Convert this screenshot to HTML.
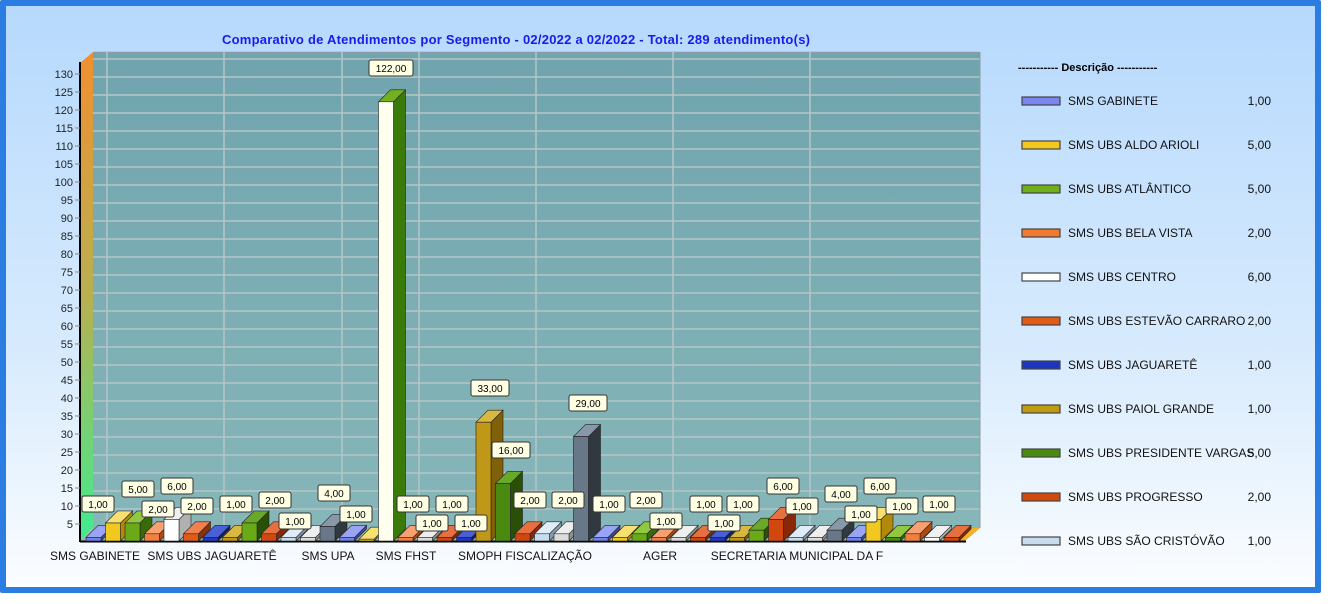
<!DOCTYPE html>
<html><head><meta charset="utf-8"><style>
html,body{margin:0;padding:0;background:#fff;}
#w{position:absolute;left:0;top:0;width:1309px;height:581px;border:6px solid #2b7de1;border-radius:2px;background:linear-gradient(#b6d9fd,#d8ebfd 60%,#fbfdff);}
svg{position:absolute;left:0;top:0;}
text{font-family:"Liberation Sans",sans-serif;}
</style></head><body>
<div id="w"></div>
<svg width="1332" height="604" viewBox="0 0 1332 604">
<defs>
<linearGradient id="lw" x1="0" y1="0" x2="0" y2="1"><stop offset="0" stop-color="#f09030"/><stop offset="0.5" stop-color="#b8b050"/><stop offset="1" stop-color="#40ec90"/></linearGradient>
<linearGradient id="bw" x1="0" y1="0" x2="0" y2="1"><stop offset="0" stop-color="#70a4ae"/><stop offset="1" stop-color="#86b6b8"/></linearGradient>
</defs>
<text x="516" y="44" text-anchor="middle" font-size="13" font-weight="bold" fill="#1a1aee" textLength="588" lengthAdjust="spacing">Comparativo de Atendimentos por Segmento - 02/2022 a 02/2022 - Total: 289 atendimento(s)</text>
<!-- back wall -->
<rect x="93" y="52" width="887" height="476" fill="url(#bw)"/>
<g stroke="#b4c6c8" stroke-width="1.5">
<line x1="93" y1="52.5" x2="980" y2="52.5" stroke="#8a9ea4"/>
<line x1="93" y1="59" x2="980" y2="59"/><line x1="93" y1="77" x2="980" y2="77"/><line x1="93" y1="95" x2="980" y2="95"/><line x1="93" y1="113" x2="980" y2="113"/><line x1="93" y1="131" x2="980" y2="131"/><line x1="93" y1="149" x2="980" y2="149"/><line x1="93" y1="167" x2="980" y2="167"/><line x1="93" y1="185" x2="980" y2="185"/><line x1="93" y1="203" x2="980" y2="203"/><line x1="93" y1="221" x2="980" y2="221"/><line x1="93" y1="239" x2="980" y2="239"/><line x1="93" y1="257" x2="980" y2="257"/><line x1="93" y1="275" x2="980" y2="275"/><line x1="93" y1="293" x2="980" y2="293"/><line x1="93" y1="311" x2="980" y2="311"/><line x1="93" y1="329" x2="980" y2="329"/><line x1="93" y1="347" x2="980" y2="347"/><line x1="93" y1="365" x2="980" y2="365"/><line x1="93" y1="383" x2="980" y2="383"/><line x1="93" y1="401" x2="980" y2="401"/><line x1="93" y1="419" x2="980" y2="419"/><line x1="93" y1="437" x2="980" y2="437"/><line x1="93" y1="455" x2="980" y2="455"/><line x1="93" y1="473" x2="980" y2="473"/><line x1="93" y1="491" x2="980" y2="491"/><line x1="93" y1="509" x2="980" y2="509"/>
<line x1="107" y1="52" x2="107" y2="528"/><line x1="224" y1="52" x2="224" y2="528"/><line x1="342" y1="52" x2="342" y2="528"/><line x1="419" y1="52" x2="419" y2="528"/><line x1="536" y1="52" x2="536" y2="528"/><line x1="673" y1="52" x2="673" y2="528"/><line x1="810" y1="52" x2="810" y2="528"/>
</g>
<line x1="980" y1="52" x2="980" y2="528" stroke="#8a9ea4"/>
<!-- left wall -->
<polygon points="80,63 93,52 93,528 80,541" fill="url(#lw)"/>
<line x1="80" y1="62" x2="80" y2="542" stroke="#000" stroke-width="2"/>
<!-- floor -->
<polygon points="80,541 93,528 980,528 965,541" fill="#9bb8a8"/>
<polygon points="955,541 968,528 980,528 965,541" fill="#f0b030"/>
<line x1="80" y1="541.5" x2="966" y2="541.5" stroke="#000" stroke-width="2"/>
<!-- y labels -->
<g font-size="11" fill="#222" text-anchor="end">
<text x="73" y="78">130</text><text x="73" y="96">125</text><text x="73" y="114">120</text><text x="73" y="132">115</text><text x="73" y="150">110</text><text x="73" y="168">105</text><text x="73" y="186">100</text><text x="73" y="204">95</text><text x="73" y="222">90</text><text x="73" y="240">85</text><text x="73" y="258">80</text><text x="73" y="276">75</text><text x="73" y="294">70</text><text x="73" y="312">65</text><text x="73" y="330">60</text><text x="73" y="348">55</text><text x="73" y="366">50</text><text x="73" y="384">45</text><text x="73" y="402">40</text><text x="73" y="420">35</text><text x="73" y="438">30</text><text x="73" y="456">25</text><text x="73" y="474">20</text><text x="73" y="492">15</text><text x="73" y="510">10</text><text x="73" y="528">5</text>
</g>
<g stroke="#888" stroke-width="1">
<line x1="75" y1="74" x2="80" y2="74"/><line x1="75" y1="92" x2="80" y2="92"/><line x1="75" y1="110" x2="80" y2="110"/><line x1="75" y1="128" x2="80" y2="128"/><line x1="75" y1="146" x2="80" y2="146"/><line x1="75" y1="164" x2="80" y2="164"/><line x1="75" y1="182" x2="80" y2="182"/><line x1="75" y1="200" x2="80" y2="200"/><line x1="75" y1="218" x2="80" y2="218"/><line x1="75" y1="236" x2="80" y2="236"/><line x1="75" y1="254" x2="80" y2="254"/><line x1="75" y1="272" x2="80" y2="272"/><line x1="75" y1="290" x2="80" y2="290"/><line x1="75" y1="308" x2="80" y2="308"/><line x1="75" y1="326" x2="80" y2="326"/><line x1="75" y1="344" x2="80" y2="344"/><line x1="75" y1="362" x2="80" y2="362"/><line x1="75" y1="380" x2="80" y2="380"/><line x1="75" y1="398" x2="80" y2="398"/><line x1="75" y1="416" x2="80" y2="416"/><line x1="75" y1="434" x2="80" y2="434"/><line x1="75" y1="452" x2="80" y2="452"/><line x1="75" y1="470" x2="80" y2="470"/><line x1="75" y1="488" x2="80" y2="488"/><line x1="75" y1="506" x2="80" y2="506"/><line x1="75" y1="524" x2="80" y2="524"/>
</g>
<!-- bars -->
<g stroke="#222" stroke-width="0.6">
<g transform="translate(86,0)"><polygon points="15,541 27,529 27,525.4 15,537.4" fill="#3c48a0"/><polygon points="0,537.4 12,525.4 27,525.4 15,537.4" fill="#9aa4f4"/><rect x="0" y="537.4" width="15" height="3.6" fill="#7080e8"/></g>
<g transform="translate(105.5,0)"><polygon points="15,541 27,529 27,511 15,523" fill="#b08a08"/><polygon points="0,523 12,511 27,511 15,523" fill="#f8e070"/><rect x="0" y="523" width="15" height="18" fill="#f0c820"/></g>
<g transform="translate(125,0)"><polygon points="15,541 27,529 27,511 15,523" fill="#3a6a08"/><polygon points="0,523 12,511 27,511 15,523" fill="#90c840"/><rect x="0" y="523" width="15" height="18" fill="#6aaa18"/></g>
<g transform="translate(144.5,0)"><polygon points="15,541 27,529 27,521.8 15,533.8" fill="#b04a10"/><polygon points="0,533.8 12,521.8 27,521.8 15,533.8" fill="#f8a070"/><rect x="0" y="533.8" width="15" height="7.2" fill="#f08040"/></g>
<g transform="translate(164,0)"><polygon points="15,541 27,529 27,507.4 15,519.4" fill="#b0b0b0"/><polygon points="0,519.4 12,507.4 27,507.4 15,519.4" fill="#f0f0f0"/><rect x="0" y="519.4" width="15" height="21.6" fill="#ffffff"/></g>
<g transform="translate(183.5,0)"><polygon points="15,541 27,529 27,521.8 15,533.8" fill="#903008"/><polygon points="0,533.8 12,521.8 27,521.8 15,533.8" fill="#f08050"/><rect x="0" y="533.8" width="15" height="7.2" fill="#e05a1a"/></g>
<g transform="translate(203,0)"><polygon points="15,541 27,529 27,525.4 15,537.4" fill="#101c70"/><polygon points="0,537.4 12,525.4 27,525.4 15,537.4" fill="#4a60d8"/><rect x="0" y="537.4" width="15" height="3.6" fill="#2038c0"/></g>
<g transform="translate(222.5,0)"><polygon points="15,541 27,529 27,525.4 15,537.4" fill="#806008"/><polygon points="0,537.4 12,525.4 27,525.4 15,537.4" fill="#d8b840"/><rect x="0" y="537.4" width="15" height="3.6" fill="#c09818"/></g>
<g transform="translate(242,0)"><polygon points="15,541 27,529 27,511 15,523" fill="#2a5008"/><polygon points="0,523 12,511 27,511 15,523" fill="#6aa828"/><rect x="0" y="523" width="15" height="18" fill="#6aaa18"/></g>
<g transform="translate(261.5,0)"><polygon points="15,541 27,529 27,521.8 15,533.8" fill="#882808"/><polygon points="0,533.8 12,521.8 27,521.8 15,533.8" fill="#e87040"/><rect x="0" y="533.8" width="15" height="7.2" fill="#d04810"/></g>
<g transform="translate(281,0)"><polygon points="15,541 27,529 27,525.4 15,537.4" fill="#8898b0"/><polygon points="0,537.4 12,525.4 27,525.4 15,537.4" fill="#e0ecf8"/><rect x="0" y="537.4" width="15" height="3.6" fill="#c8dcf0"/></g>
<g transform="translate(300.5,0)"><polygon points="15,541 27,529 27,525.4 15,537.4" fill="#909090"/><polygon points="0,537.4 12,525.4 27,525.4 15,537.4" fill="#eeeeee"/><rect x="0" y="537.4" width="15" height="3.6" fill="#dcdcdc"/></g>
<g transform="translate(320,0)"><polygon points="15,541 27,529 27,514.6 15,526.6" fill="#303840"/><polygon points="0,526.6 12,514.6 27,514.6 15,526.6" fill="#8898a8"/><rect x="0" y="526.6" width="15" height="14.4" fill="#687888"/></g>
<g transform="translate(339.5,0)"><polygon points="15,541 27,529 27,525.4 15,537.4" fill="#3c48a0"/><polygon points="0,537.4 12,525.4 27,525.4 15,537.4" fill="#9aa4f4"/><rect x="0" y="537.4" width="15" height="3.6" fill="#7080e8"/></g>
<g transform="translate(359,0)"><polygon points="15,541 27,529 27,527.2 15,539.2" fill="#b08a08"/><polygon points="0,539.2 12,527.2 27,527.2 15,539.2" fill="#f8e070"/><rect x="0" y="539.2" width="15" height="1.8" fill="#f0c820"/></g>
<g transform="translate(378.5,0)"><polygon points="15,541 27,529 27,89.8 15,101.8" fill="#3a7a08"/><polygon points="0,101.8 12,89.8 27,89.8 15,101.8" fill="#72b020"/><rect x="0" y="101.8" width="15" height="439.2" fill="#fffff0"/></g>
<g transform="translate(398,0)"><polygon points="15,541 27,529 27,525.4 15,537.4" fill="#b04a10"/><polygon points="0,537.4 12,525.4 27,525.4 15,537.4" fill="#f8a070"/><rect x="0" y="537.4" width="15" height="3.6" fill="#f08040"/></g>
<g transform="translate(417.5,0)"><polygon points="15,541 27,529 27,525.4 15,537.4" fill="#909090"/><polygon points="0,537.4 12,525.4 27,525.4 15,537.4" fill="#eeeeee"/><rect x="0" y="537.4" width="15" height="3.6" fill="#dcdcdc"/></g>
<g transform="translate(437,0)"><polygon points="15,541 27,529 27,525.4 15,537.4" fill="#882808"/><polygon points="0,537.4 12,525.4 27,525.4 15,537.4" fill="#e87040"/><rect x="0" y="537.4" width="15" height="3.6" fill="#d04810"/></g>
<g transform="translate(456.5,0)"><polygon points="15,541 27,529 27,525.4 15,537.4" fill="#101c70"/><polygon points="0,537.4 12,525.4 27,525.4 15,537.4" fill="#4a60d8"/><rect x="0" y="537.4" width="15" height="3.6" fill="#2038c0"/></g>
<g transform="translate(476,0)"><polygon points="15,541 27,529 27,410.2 15,422.2" fill="#806008"/><polygon points="0,422.2 12,410.2 27,410.2 15,422.2" fill="#d8b840"/><rect x="0" y="422.2" width="15" height="118.8" fill="#c09818"/></g>
<g transform="translate(495.5,0)"><polygon points="15,541 27,529 27,471.4 15,483.4" fill="#2a5008"/><polygon points="0,483.4 12,471.4 27,471.4 15,483.4" fill="#6aa828"/><rect x="0" y="483.4" width="15" height="57.6" fill="#4a8a10"/></g>
<g transform="translate(515,0)"><polygon points="15,541 27,529 27,521.8 15,533.8" fill="#882808"/><polygon points="0,533.8 12,521.8 27,521.8 15,533.8" fill="#e87040"/><rect x="0" y="533.8" width="15" height="7.2" fill="#d04810"/></g>
<g transform="translate(534.5,0)"><polygon points="15,541 27,529 27,521.8 15,533.8" fill="#8898b0"/><polygon points="0,533.8 12,521.8 27,521.8 15,533.8" fill="#e0ecf8"/><rect x="0" y="533.8" width="15" height="7.2" fill="#c8dcf0"/></g>
<g transform="translate(554,0)"><polygon points="15,541 27,529 27,521.8 15,533.8" fill="#909090"/><polygon points="0,533.8 12,521.8 27,521.8 15,533.8" fill="#eeeeee"/><rect x="0" y="533.8" width="15" height="7.2" fill="#dcdcdc"/></g>
<g transform="translate(573.5,0)"><polygon points="15,541 27,529 27,424.6 15,436.6" fill="#303840"/><polygon points="0,436.6 12,424.6 27,424.6 15,436.6" fill="#8898a8"/><rect x="0" y="436.6" width="15" height="104.4" fill="#687888"/></g>
<g transform="translate(593,0)"><polygon points="15,541 27,529 27,525.4 15,537.4" fill="#3c48a0"/><polygon points="0,537.4 12,525.4 27,525.4 15,537.4" fill="#9aa4f4"/><rect x="0" y="537.4" width="15" height="3.6" fill="#7080e8"/></g>
<g transform="translate(612.5,0)"><polygon points="15,541 27,529 27,525.4 15,537.4" fill="#b08a08"/><polygon points="0,537.4 12,525.4 27,525.4 15,537.4" fill="#f8e070"/><rect x="0" y="537.4" width="15" height="3.6" fill="#f0c820"/></g>
<g transform="translate(632,0)"><polygon points="15,541 27,529 27,521.8 15,533.8" fill="#3a6a08"/><polygon points="0,533.8 12,521.8 27,521.8 15,533.8" fill="#90c840"/><rect x="0" y="533.8" width="15" height="7.2" fill="#6aaa18"/></g>
<g transform="translate(651.5,0)"><polygon points="15,541 27,529 27,525.4 15,537.4" fill="#b04a10"/><polygon points="0,537.4 12,525.4 27,525.4 15,537.4" fill="#f8a070"/><rect x="0" y="537.4" width="15" height="3.6" fill="#f08040"/></g>
<g transform="translate(671,0)"><polygon points="15,541 27,529 27,525.4 15,537.4" fill="#909090"/><polygon points="0,537.4 12,525.4 27,525.4 15,537.4" fill="#eeeeee"/><rect x="0" y="537.4" width="15" height="3.6" fill="#dcdcdc"/></g>
<g transform="translate(690.5,0)"><polygon points="15,541 27,529 27,525.4 15,537.4" fill="#882808"/><polygon points="0,537.4 12,525.4 27,525.4 15,537.4" fill="#e87040"/><rect x="0" y="537.4" width="15" height="3.6" fill="#d04810"/></g>
<g transform="translate(710,0)"><polygon points="15,541 27,529 27,525.4 15,537.4" fill="#101c70"/><polygon points="0,537.4 12,525.4 27,525.4 15,537.4" fill="#4a60d8"/><rect x="0" y="537.4" width="15" height="3.6" fill="#2038c0"/></g>
<g transform="translate(729.5,0)"><polygon points="15,541 27,529 27,525.4 15,537.4" fill="#806008"/><polygon points="0,537.4 12,525.4 27,525.4 15,537.4" fill="#d8b840"/><rect x="0" y="537.4" width="15" height="3.6" fill="#c09818"/></g>
<g transform="translate(749,0)"><polygon points="15,541 27,529 27,518.2 15,530.2" fill="#2a5008"/><polygon points="0,530.2 12,518.2 27,518.2 15,530.2" fill="#6aa828"/><rect x="0" y="530.2" width="15" height="10.8" fill="#6aaa18"/></g>
<g transform="translate(768.5,0)"><polygon points="15,541 27,529 27,507.4 15,519.4" fill="#882808"/><polygon points="0,519.4 12,507.4 27,507.4 15,519.4" fill="#e87040"/><rect x="0" y="519.4" width="15" height="21.6" fill="#d04810"/></g>
<g transform="translate(788,0)"><polygon points="15,541 27,529 27,525.4 15,537.4" fill="#8898b0"/><polygon points="0,537.4 12,525.4 27,525.4 15,537.4" fill="#e0ecf8"/><rect x="0" y="537.4" width="15" height="3.6" fill="#c8dcf0"/></g>
<g transform="translate(807.5,0)"><polygon points="15,541 27,529 27,525.4 15,537.4" fill="#909090"/><polygon points="0,537.4 12,525.4 27,525.4 15,537.4" fill="#eeeeee"/><rect x="0" y="537.4" width="15" height="3.6" fill="#dcdcdc"/></g>
<g transform="translate(827,0)"><polygon points="15,541 27,529 27,518.2 15,530.2" fill="#303840"/><polygon points="0,530.2 12,518.2 27,518.2 15,530.2" fill="#8898a8"/><rect x="0" y="530.2" width="15" height="10.8" fill="#687888"/></g>
<g transform="translate(846.5,0)"><polygon points="15,541 27,529 27,525.4 15,537.4" fill="#3c48a0"/><polygon points="0,537.4 12,525.4 27,525.4 15,537.4" fill="#9aa4f4"/><rect x="0" y="537.4" width="15" height="3.6" fill="#7080e8"/></g>
<g transform="translate(866,0)"><polygon points="15,541 27,529 27,507.4 15,519.4" fill="#b08a08"/><polygon points="0,519.4 12,507.4 27,507.4 15,519.4" fill="#f8e070"/><rect x="0" y="519.4" width="15" height="21.6" fill="#f0c820"/></g>
<g transform="translate(885.5,0)"><polygon points="15,541 27,529 27,525.4 15,537.4" fill="#3a6a08"/><polygon points="0,537.4 12,525.4 27,525.4 15,537.4" fill="#90c840"/><rect x="0" y="537.4" width="15" height="3.6" fill="#4a8a10"/></g>
<g transform="translate(905,0)"><polygon points="15,541 27,529 27,521.8 15,533.8" fill="#b04a10"/><polygon points="0,533.8 12,521.8 27,521.8 15,533.8" fill="#f8a070"/><rect x="0" y="533.8" width="15" height="7.2" fill="#f08040"/></g>
<g transform="translate(924.5,0)"><polygon points="15,541 27,529 27,525.4 15,537.4" fill="#b0b0b0"/><polygon points="0,537.4 12,525.4 27,525.4 15,537.4" fill="#f0f0f0"/><rect x="0" y="537.4" width="15" height="3.6" fill="#ffffff"/></g>
<g transform="translate(944,0)"><polygon points="15,541 27,529 27,525.4 15,537.4" fill="#882808"/><polygon points="0,537.4 12,525.4 27,525.4 15,537.4" fill="#e87040"/><rect x="0" y="537.4" width="15" height="3.6" fill="#d04810"/></g>
</g>
<!-- value labels -->
<g font-size="10" fill="#000" text-anchor="middle">
<g stroke="#333" stroke-width="1" fill="#ffffe4">
<rect x="82" y="496" width="32" height="16" rx="2"/><rect x="122" y="481" width="32" height="16" rx="2"/><rect x="142" y="501" width="32" height="16" rx="2"/><rect x="161" y="478" width="32" height="16" rx="2"/><rect x="181" y="498" width="32" height="16" rx="2"/><rect x="220" y="496" width="32" height="16" rx="2"/><rect x="259" y="492" width="32" height="16" rx="2"/><rect x="279" y="513" width="32" height="16" rx="2"/><rect x="318" y="485" width="32" height="16" rx="2"/><rect x="340" y="506" width="32" height="16" rx="2"/><rect x="369" y="60" width="44" height="16" rx="2"/><rect x="397" y="496" width="32" height="16" rx="2"/><rect x="416" y="515" width="32" height="16" rx="2"/><rect x="436" y="496" width="32" height="16" rx="2"/><rect x="455" y="515" width="32" height="16" rx="2"/><rect x="471" y="380" width="38" height="16" rx="2"/><rect x="492" y="442" width="38" height="16" rx="2"/><rect x="514" y="492" width="32" height="16" rx="2"/><rect x="552" y="492" width="32" height="16" rx="2"/><rect x="569" y="395" width="38" height="16" rx="2"/><rect x="593" y="496" width="32" height="16" rx="2"/><rect x="630" y="492" width="32" height="16" rx="2"/><rect x="650" y="513" width="32" height="16" rx="2"/><rect x="690" y="496" width="32" height="16" rx="2"/><rect x="708" y="515" width="32" height="16" rx="2"/><rect x="727" y="496" width="32" height="16" rx="2"/><rect x="767" y="478" width="32" height="16" rx="2"/><rect x="786" y="498" width="32" height="16" rx="2"/><rect x="825" y="486" width="32" height="16" rx="2"/><rect x="845" y="506" width="32" height="16" rx="2"/><rect x="864" y="478" width="32" height="16" rx="2"/><rect x="886" y="498" width="32" height="16" rx="2"/><rect x="923" y="496" width="32" height="16" rx="2"/>
</g>
<text x="98" y="508">1,00</text><text x="138" y="493">5,00</text><text x="158" y="513">2,00</text><text x="177" y="490">6,00</text><text x="197" y="510">2,00</text><text x="236" y="508">1,00</text><text x="275" y="504">2,00</text><text x="295" y="525">1,00</text><text x="334" y="497">4,00</text><text x="356" y="518">1,00</text><text x="391" y="72">122,00</text><text x="413" y="508">1,00</text><text x="432" y="527">1,00</text><text x="452" y="508">1,00</text><text x="471" y="527">1,00</text><text x="490" y="392">33,00</text><text x="511" y="454">16,00</text><text x="530" y="504">2,00</text><text x="568" y="504">2,00</text><text x="588" y="407">29,00</text><text x="609" y="508">1,00</text><text x="646" y="504">2,00</text><text x="666" y="525">1,00</text><text x="706" y="508">1,00</text><text x="724" y="527">1,00</text><text x="743" y="508">1,00</text><text x="783" y="490">6,00</text><text x="802" y="510">1,00</text><text x="841" y="498">4,00</text><text x="861" y="518">1,00</text><text x="880" y="490">6,00</text><text x="902" y="510">1,00</text><text x="939" y="508">1,00</text>
</g>
<!-- category labels -->
<g font-size="12" fill="#111" text-anchor="middle">
<text x="95" y="560">SMS GABINETE</text><text x="212" y="560">SMS UBS JAGUARETÊ</text><text x="328" y="560">SMS UPA</text><text x="406" y="560">SMS FHST</text><text x="525" y="560">SMOPH FISCALIZAÇÃO</text><text x="660" y="560">AGER</text><text x="797" y="560">SECRETARIA MUNICIPAL DA F</text>
</g>
<!-- legend -->
<text x="1018" y="71" font-size="11" font-weight="bold" fill="#000">----------- Descrição -----------</text>
<g stroke="#444" stroke-width="1.2">
<rect x="1022" y="97" width="38" height="8" fill="#7b86f0"/>
<rect x="1022" y="141" width="38" height="8" fill="#f2c81e"/>
<rect x="1022" y="185" width="38" height="8" fill="#6fb01a"/>
<rect x="1022" y="229" width="38" height="8" fill="#f07a30"/>
<rect x="1022" y="273" width="38" height="8" fill="#ffffff"/>
<rect x="1022" y="317" width="38" height="8" fill="#e05a18"/>
<rect x="1022" y="361" width="38" height="8" fill="#1c36c0"/>
<rect x="1022" y="405" width="38" height="8" fill="#c09a10"/>
<rect x="1022" y="449" width="38" height="8" fill="#4a8a10"/>
<rect x="1022" y="493" width="38" height="8" fill="#d04a10"/>
<rect x="1022" y="537" width="38" height="8" fill="#c8dcf0"/>
</g>
<g font-size="12" fill="#111">
<text x="1068" y="105">SMS GABINETE</text><text x="1068" y="149">SMS UBS ALDO ARIOLI</text><text x="1068" y="193">SMS UBS ATLÂNTICO</text><text x="1068" y="237">SMS UBS BELA VISTA</text><text x="1068" y="281">SMS UBS CENTRO</text><text x="1068" y="325">SMS UBS ESTEVÃO CARRARO</text><text x="1068" y="369">SMS UBS JAGUARETÊ</text><text x="1068" y="413">SMS UBS PAIOL GRANDE</text><text x="1068" y="457">SMS UBS PRESIDENTE VARGAS</text><text x="1068" y="501">SMS UBS PROGRESSO</text><text x="1068" y="545">SMS UBS SÃO CRISTÓVÃO</text>
</g>
<g font-size="12" fill="#111" text-anchor="end">
<text x="1271" y="105">1,00</text><text x="1271" y="149">5,00</text><text x="1271" y="193">5,00</text><text x="1271" y="237">2,00</text><text x="1271" y="281">6,00</text><text x="1271" y="325">2,00</text><text x="1271" y="369">1,00</text><text x="1271" y="413">1,00</text><text x="1271" y="457">5,00</text><text x="1271" y="501">2,00</text><text x="1271" y="545">1,00</text>
</g>
</svg>
</body></html>
